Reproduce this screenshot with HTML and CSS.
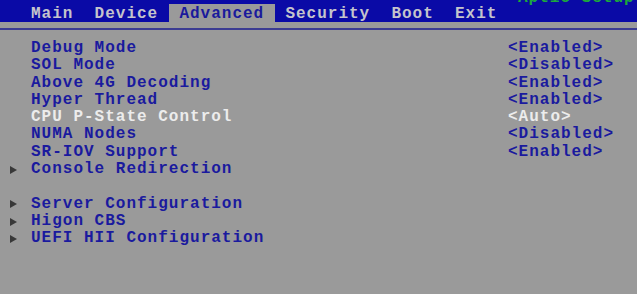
FILE: index.html
```html
<!DOCTYPE html>
<html lang="en">

<head>
    <meta charset="UTF-8" />
    <meta name="viewport" content="width=device-width, initial-scale=1.0" />
    <title>BIOS Setup - Advanced</title>
    <link rel="stylesheet" href="styles.css">
</head>

<body>
    <div class="header">
        <div class="menu">
            <span class="tab">Main</span>
            <span class="tab">Device</span>
            <span class="tab active">Advanced</span>
            <span class="tab">Security</span>
            <span class="tab">Boot</span>
            <span class="tab">Exit</span>
        </div>
        <div class="brand">Aptio Setup Utility - Copyright</div>
    </div>
    <div class="strip"></div>

    <div class="items">
        <div class="row"><span class="label">Debug Mode</span><span class="value">&lt;Enabled&gt;</span></div>
        <div class="row"><span class="label">SOL Mode</span><span class="value">&lt;Disabled&gt;</span></div>
        <div class="row"><span class="label">Above 4G Decoding</span><span class="value">&lt;Enabled&gt;</span></div>
        <div class="row"><span class="label">Hyper Thread</span><span class="value">&lt;Enabled&gt;</span></div>
        <div class="row selected"><span class="label">CPU P-State Control</span><span class="value">&lt;Auto&gt;</span></div>
        <div class="row"><span class="label">NUMA Nodes</span><span class="value">&lt;Disabled&gt;</span></div>
        <div class="row"><span class="label">SR-IOV Support</span><span class="value">&lt;Enabled&gt;</span></div>
        <div class="row sub"><span class="arrow"></span><span class="label">Console Redirection</span></div>
        <div class="row"></div>
        <div class="row sub"><span class="arrow"></span><span class="label">Server Configuration</span></div>
        <div class="row sub"><span class="arrow"></span><span class="label">Higon CBS</span></div>
        <div class="row sub"><span class="arrow"></span><span class="label">UEFI HII Configuration</span></div>
    </div>
</body>

</html>
```

FILE: styles.css
```css
body {
    margin: 0;
    background: #9a9a9a;
    font-family: "Liberation Mono", "DejaVu Sans Mono", monospace;
    font-weight: bold;
    font-size: 16px;
    letter-spacing: 1px;
    overflow: hidden;
}

.header {
    height: 22px;
    background: #0a0aa6;
    display: flex;
    overflow: hidden;
}

.menu {
    display: flex;
    align-items: flex-end;
    padding-left: 20.4px;
}

.tab {
    color: #c4c4cc;
    padding: 0 10.6px;
    height: 18px;
    line-height: 20px;
}

.tab.active {
    background: #9a9a9a;
    color: #1a1a9c;
}

.brand {
    margin-left: auto;
    margin-top: -11px;
    color: #1ca83c;
    white-space: nowrap;
    width: 119px;
    overflow: hidden;
}

.strip {
    height: 6px;
    border-bottom: 2px solid #3c3c92;
}

.items {
    padding-top: 10px;
}

.row {
    display: flex;
    align-items: center;
    height: 17.3px;
    line-height: 17.3px;
    color: #1a1a9e;
    white-space: nowrap;
}

.label {
    width: 477px;
    padding-left: 31px;
}

.sub .label {
    padding-left: 14px;
}

.selected {
    color: #ececec;
}

.arrow {
    margin-left: 10px;
    width: 0;
    height: 0;
    border-left: 7px solid #383838;
    border-top: 4.5px solid transparent;
    border-bottom: 4.5px solid transparent;
}
```
